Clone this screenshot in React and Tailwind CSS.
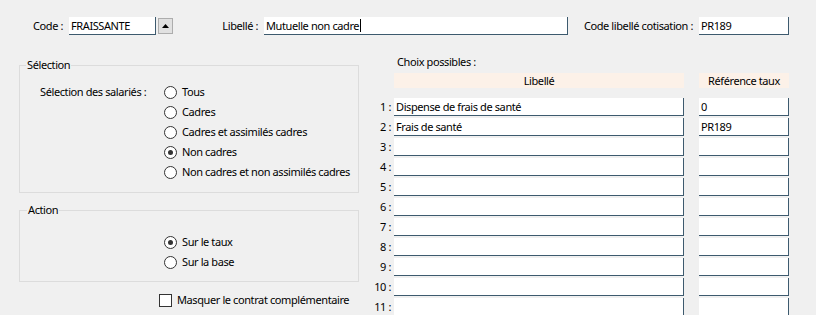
import React from "react";

const Radio = ({ checked, label }) => (
  <div className="flex h-[20px] items-center">
    <span className="flex h-[13px] w-[13px] items-center justify-center rounded-full border border-[#333333] bg-white">
      {checked && <span className="h-[5px] w-[5px] rounded-full bg-[#333333]" />}
    </span>
    <span className="ml-[5px] whitespace-nowrap leading-[20px]">{label}</span>
  </div>
);

const Field = ({ w, children }) => (
  <div className={`${w} h-[18px] shrink-0 overflow-hidden whitespace-nowrap border-r border-b border-[#3d5a6e] bg-white pl-[2px] leading-[17px]`}>
    {children}
  </div>
);

export default function App() {
  const rows = [
    ["Dispense de frais de santé", "0"],
    ["Frais de santé", "PR189"],
    ["", ""],
    ["", ""],
    ["", ""],
    ["", ""],
    ["", ""],
    ["", ""],
    ["", ""],
    ["", ""],
    ["", ""],
  ];
  return (
    <div className="h-[315px] w-[816px] overflow-hidden bg-[#f0f0f0] font-['Noto_Sans',sans-serif] text-[11px] tracking-[-0.4px] text-black">
      {/* Top row */}
      <div className="flex items-start pt-[17px]">
        <div className="w-[69px] shrink-0 pr-[6px] text-right leading-[18px]">Code :</div>
        <Field w="w-[87px]">FRAISSANTE</Field>
        <div className="ml-[2px] mt-[1px] flex h-[16px] w-[15px] shrink-0 items-center justify-center border border-[#adadad] bg-[#e1e1e1]">
          <svg width="7" height="4" viewBox="0 0 7 4">
            <path d="M0 4 L3.5 0 L7 4 Z" fill="#000" />
          </svg>
        </div>
        <div className="w-[91px] shrink-0 pr-[6px] text-right leading-[18px]">Libellé :</div>
        <Field w="w-[304px]">
          <span>Mutuelle non cadre</span>
          <span className="ml-[1px] inline-block h-[13px] w-[1px] translate-y-[2px] bg-black" />
        </Field>
        <div className="w-[131px] shrink-0 whitespace-nowrap pr-[6px] text-right leading-[18px]">Code libellé cotisation :</div>
        <Field w="w-[90px]">PR189</Field>
      </div>

      {/* Main */}
      <div className="mt-[20px] flex">
        {/* Left column */}
        <div className="w-[370px] shrink-0 pl-[19px]">
          <div className="relative mt-[10px] w-[340px] border border-[#dcdcdc] pl-[20px] pt-[16px] pb-[10px]">
            <span className="absolute -top-[8px] left-[6px] bg-[#f0f0f0] px-[1px] leading-[14px]">Sélection</span>
            <div className="flex">
              <div className="w-[124px] shrink-0 whitespace-nowrap leading-[20px]">Sélection des salariés :</div>
              <div className="flex flex-col">
                <Radio label="Tous" />
                <Radio label="Cadres" />
                <Radio label="Cadres et assimilés cadres" />
                <Radio checked label="Non cadres" />
                <Radio label="Non cadres et non assimilés cadres" />
              </div>
            </div>
          </div>

          <div className="relative mt-[17px] w-[340px] border border-[#dcdcdc] pl-[144px] pt-[21px] pb-[9px]">
            <span className="absolute -top-[8px] left-[7px] bg-[#f0f0f0] px-[1px] leading-[14px]">Action</span>
            <Radio checked label="Sur le taux" />
            <Radio label="Sur la base" />
          </div>

          <div className="ml-[140px] mt-[8px] flex h-[20px] items-center">
            <span className="h-[13px] w-[13px] border border-[#333333] bg-white" />
            <span className="ml-[5px] whitespace-nowrap">Masquer le contrat complémentaire</span>
          </div>
        </div>

        {/* Right column */}
        <div className="flex-1">
          <div className="pl-[27px] leading-[14px]">Choix possibles :</div>
          <div className="ml-[24px] mt-[4px] flex">
            <div className="h-[15px] w-[290px] bg-[#fcf1e8] text-center leading-[15px]">Libellé</div>
            <div className="ml-[15px] h-[15px] w-[90px] bg-[#fcf1e8] text-center leading-[15px]">Référence taux</div>
          </div>
          <div className="mt-[10px] flex flex-col gap-[2px]">
            {rows.map((r, i) => (
              <div key={i} className="flex h-[18px] items-center">
                <div className="w-[24px] shrink-0 whitespace-nowrap pr-[3px] text-right leading-[18px]">{i + 1} :</div>
                <Field w="w-[290px]">{r[0]}</Field>
                <div className="ml-[15px]">
                  <Field w="w-[90px]">{r[1]}</Field>
                </div>
              </div>
            ))}
          </div>
        </div>
      </div>
    </div>
  );
}
